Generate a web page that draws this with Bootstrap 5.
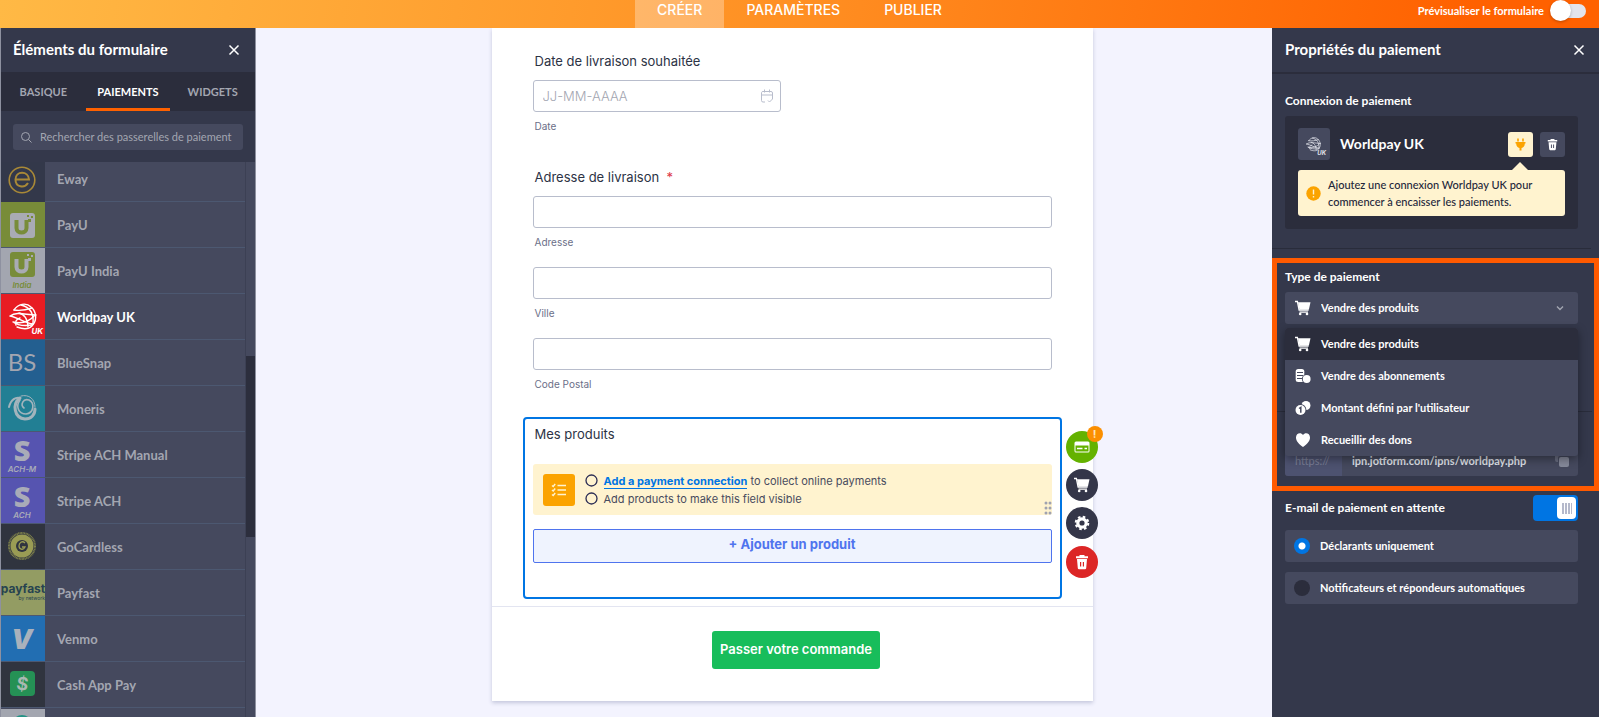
<!DOCTYPE html>
<html lang="fr">
<head>
<meta charset="utf-8">
<meta name="viewport" content="width=device-width, initial-scale=1">
<title>Créateur de formulaire</title>
<link rel="stylesheet" href="https://cdn.jsdelivr.net/npm/bootstrap@5.3.0/dist/css/bootstrap.min.css">
<style>
:root{--panel:#34384b;--panel-dark:#2b2d3c;--field:#45495e;--muted:#a3a6b1;--accent:#ff6100;--blue:#0075e3;--ui:Lato,"Liberation Sans",sans-serif;--form:Inter,"Liberation Sans",sans-serif}
body{font-family:var(--ui);background:#f3f3fe;font-size:11px;line-height:16px}
button,input,select{font-family:inherit}
.topbar{height:28px;background:linear-gradient(100deg,#ffb945,#ff8f22 50%,#ff6100 92%)}
.topbar .nav-link{color:#fff;font:500 14px/20px var(--form);padding:0 22px 8px;border-radius:0}
.topbar .nav-link.active{background:#ffffff4d}
.preview{right:13px;top:0;color:#fff;font-weight:700;height:21px}
.preview-toggle{appearance:none;width:34px;height:14px;border-radius:7px;background:#e3e4ec;margin:0;position:relative}
.preview-toggle::before{content:"";position:absolute;left:-2px;top:-4px;width:21px;height:21px;border-radius:50%;background:#fff;box-shadow:0 1px 3px #0004}
.side{background:var(--panel);color:#fff}
.side-left{width:256px;border-left:1px solid #8e91a0;border-right:1px solid #8e91a0}
.side-right{width:327px}
.side-title{height:44px;padding:0 13px 2px}
.side-left .side-title{padding-left:12px;padding-right:14px}
.side-title h2{font-size:15px;font-weight:700;line-height:20px;margin:0}
.side-right .side-title{height:46px;border-bottom:2px solid var(--panel-dark)}
.plain{border:0;background:none;padding:0;color:inherit;display:flex}
.side-title .plain{margin-top:2px}
.side-tabs{background:var(--panel-dark);height:39px}
.side-tabs .nav-link{color:var(--muted);font-size:11px;font-weight:700;line-height:32px;padding:4px 0 0;border-radius:0;border-bottom:3px solid transparent}
.side-tabs .nav-link.active{color:#fff;border-color:var(--accent)}
.search{margin:13px 12px 12px;height:26px;background:var(--field);border-radius:3px;padding:0 6px 0 8px;gap:8px;color:var(--muted)}
.search input{background:none;border:0;color:#fff;font-size:11px;padding:0;min-width:0;outline:0}
.search input::placeholder{color:var(--muted);opacity:1}
.pay-list{background:var(--field);margin-top:-5px;min-width:0}
.pay-list .list-group-item{height:46px;padding:0;border:0;border-bottom:1px solid #4c5871;border-radius:0;background:none;color:var(--muted);font-size:13px;font-weight:700;gap:12px;flex:none}
.pay-list .list-group-item:first-child{height:45px}
.pay-list .list-group-item.chosen{color:#fff}
.pay-list svg{width:44px;height:45px;flex:none}
.track{width:10px;background:var(--field);border-left:1px solid #3c4054}
.thumb{background:#2c2e3d}
.canvas{padding-left:56px}
.sheet{max-width:601px;background:#fff;box-shadow:0 2px 4px #c4c7dc;padding:24px 0 32px;font-family:var(--form);color:#2c3345;height:max-content}
.group{padding:0 41px}
.q{font-size:13px;line-height:18px;font-weight:400;margin:0 0 10px 2px;display:block}
.sub{font-size:10px;line-height:14px;color:#6b6f88;margin:7px 0 0 2px;display:block}
.box{height:32px;border:1px solid #b8bdcc;border-radius:3px;padding:0 9px;font-size:13px;width:100%;color:#2c3345}
.box::placeholder{color:#a3a6b1;opacity:1;font-weight:300}
.date{width:248px}
.date svg{position:absolute;right:8px;top:9px}
.gap-a{margin-top:35px}.gap-b{margin-top:18px}
.selected{margin:26px 31px 7px;border:2px solid var(--blue);border-radius:4px;padding:6px 8px 34px}
.notice{margin-top:21px;background:#fff3cf;border-radius:3px;padding:7px 10px;gap:10px;height:51px;font-size:11px;line-height:18px;color:#484b5e}
.notice .tile{width:32px;height:32px;border-radius:3px;background:#fba300}
.notice li{gap:6px}
.notice a{color:var(--blue);font-weight:700;text-decoration:none;border-bottom:1px solid var(--blue);line-height:14px}
.grip{right:0;bottom:0}
.add{margin-top:14px;height:34px;border:1px solid #4f74ee;background:#eff3fe;color:#4f74ee;font-size:13px;font-weight:700;border-radius:2px;padding:0 0 4px}
.tools{left:calc(100% + 6px);top:12px;gap:6px}
.tool{width:32px;height:32px;border:0;border-radius:50%;background:#343649;padding:0;position:relative;display:flex;align-items:center;justify-content:center}
.tool.pay{background:#64b200}.tool.del{background:#dc2626;margin-top:1px}
.alert-dot{position:absolute;right:-5px;top:-5px;width:16px;height:16px;border-radius:50%;background:#fb8f00;color:#ffe3b8;font:700 11px/16px var(--form)}
.send{border-top:1px solid #e3e5f1;padding:24px 0 0 8px}
.send button{height:38px;border:0;border-radius:3px;background:#18bd5b;color:#fff;font-size:13px;font-weight:600;padding:0 8px 2px}
.props{padding:19px 21px 0 13px}
.lab{font-size:12px;line-height:16px;font-weight:700;margin:0 0 7px;display:block}
.conn{background:var(--panel-dark);border-radius:3px;padding:12px 13px 13px}
.conn .logo{width:32px;height:32px;border-radius:3px;background:var(--field)}
.conn h3{font-size:14px;line-height:20px;font-weight:700;margin:0 0 0 10px}
.sq{width:25px;height:25px;border-radius:3px;background:var(--field);align-items:center;justify-content:center}
.sq.on{background:#fff3cf;margin-right:7px}
.tip{margin-top:10px;background:#fff3cf;border-radius:3px;color:#23263a;font-size:11px;line-height:17px;font-weight:500;padding:6px 8px;gap:7px;position:relative}
.tip::before{content:"";position:absolute;right:37px;top:-8px;border:8px solid transparent;border-top:0;border-bottom-color:#fff3cf}
.line{border-top:1px solid #292c3b;margin:19px 8px 0 0}
.spot{border:5px solid #ff5a00;margin-top:9px;padding:6px 16px 10px 8px}
.pick{height:32px;width:100%;appearance:none;border:0;border-radius:3px;background:var(--field);color:#fff;font-size:11px;font-weight:700;padding:0 36px}
.pick-icon{position:absolute;left:10px;top:8px}.pick-caret{position:absolute;right:14px;top:13px}
.menu{position:absolute;top:36px;left:0;right:0;z-index:2;background:var(--field);border-radius:3px;overflow:hidden;box-shadow:0 3px 10px #0006;margin:0;padding:0}
.menu button{height:32px;width:100%;border:0;background:none;color:#fff;font-size:11px;font-weight:700;padding:0 10px;gap:10px;text-align:left}
.menu .cur{background:var(--panel-dark)}
.spot .line{margin:87px -14px 0 -8px}
.url{margin-top:32px;height:32px;background:var(--field);border-radius:3px;overflow:hidden}
.url span{width:57px;background:#4d5270;color:#7b7f96;line-height:34px;padding-left:10px}
.url input{border:0;background:none;color:#dfe0e6;font-size:11px;font-weight:700;padding:2px 0 0 10px;min-width:0}
.mail{margin:4px 21px 0 13px}
.big-toggle{appearance:none;width:45px;height:26px;border-radius:4px;background:var(--blue);margin:0;position:relative}
.big-toggle::before{content:"";position:absolute;right:2px;top:2px;width:19px;height:22px;border-radius:4px;background:repeating-linear-gradient(90deg,#b5b9cb 0 2px,#fff 2px 3px) center/10px 11px no-repeat #fff}
.opt{margin:9px 21px 0 13px;height:32px;background:var(--field);border-radius:3px;padding:0 9px;gap:10px;font-weight:700}
.opt + .opt{margin-top:10px}
.opt input{appearance:none;width:16px;height:16px;border-radius:50%;background:#2b2d3c;margin:0}
.opt input:checked{background:radial-gradient(circle,#fff 0 3px,var(--blue) 4px)}
svg text{font-family:Inter,"Liberation Sans",sans-serif}
</style>
</head>
<body class="vh-100 d-flex flex-column overflow-hidden">
<svg class="d-none">
 <symbol id="cart" viewBox="0 0 16 16"><path d="M0 1.500h2.400l1.700 8.500h9.500M4.500 12.200h8.500" fill="none" stroke="currentColor" stroke-width="1.300"/><path d="M3 2.200h12.500l-1.600 7.300H4.400z" fill="currentColor"/><circle cx="5.200" cy="14" r="1.300" fill="currentColor"/><circle cx="12" cy="14" r="1.300" fill="currentColor"/></symbol>
 <symbol id="trash" viewBox="0 0 14 16"><path d="M4.500 1h5v1.200H13v2H1v-2h3.500zM2 5h10l-.8 9.200a1.200 1.200 0 0 1-1.200 1H4a1.200 1.200 0 0 1-1.200-1zM5 8v4.500h1.200V8zM7.800 8v4.500H9V8z" fill="currentColor" fill-rule="evenodd"/></symbol>
 <symbol id="cross" viewBox="0 0 14 14"><path d="M2.500 2.500l9 9M11.500 2.500l-9 9" stroke="currentColor" stroke-width="1.500"/></symbol>
 <symbol id="globe" viewBox="0 0 28 28"><g fill="none" stroke="currentColor" stroke-width="1.400" stroke-linecap="round"><path d="M5 7C9 1 17-1 22 4c6 5 6 14 1 19-4 4-10 3-15 1"/><path d="M5 7c6 1 12 0 18-2M1 13c7-5 16-1 26-1M1 13c9 2 15 7 23 8M4 19c8 2 16 0 22-7M4 19c4 3 12 4 19 3"/><path d="M12 2c9 2 13 9 12 19M10 10c5 1 9 6 9 14M11 15c-4 1-5 4-4 7"/></g></symbol>
</svg>

<header class="topbar position-relative d-flex justify-content-center flex-shrink-0">
 <nav class="nav"><a class="nav-link active" href="#">CRÉER</a><a class="nav-link" href="#">PARAMÈTRES</a><a class="nav-link" href="#">PUBLIER</a></nav>
 <div class="preview position-absolute d-flex align-items-center gap-2"><label for="preview">Prévisualiser le formulaire</label><input class="preview-toggle" type="checkbox" role="switch" id="preview"></div>
</header>

<div class="d-flex flex-grow-1 overflow-hidden">
 <aside class="side side-left d-flex flex-column flex-shrink-0">
  <div class="side-title d-flex align-items-center justify-content-between flex-shrink-0"><h2>Éléments du formulaire</h2><button class="plain" aria-label="Fermer"><svg width="14" height="14"><use href="#cross"/></svg></button></div>
  <nav class="side-tabs nav nav-fill flex-nowrap flex-shrink-0"><a class="nav-link w-100" href="#">BASIQUE</a><a class="nav-link w-100 active" href="#">PAIEMENTS</a><a class="nav-link w-100" href="#">WIDGETS</a></nav>
  <div class="search d-flex align-items-center flex-shrink-0"><svg width="11" height="11" viewBox="0 0 11 11" class="flex-shrink-0"><circle cx="4.500" cy="4.500" r="4" fill="none" stroke="currentColor"/><path d="M7.500 7.500l3 3" stroke="currentColor"/></svg><input class="flex-grow-1" type="text" aria-label="Rechercher" placeholder="Rechercher des passerelles de paiement"></div>
  <div class="d-flex flex-grow-1 overflow-hidden">
   <div class="pay-list list-group list-group-flush flex-grow-1">
    <button class="list-group-item d-flex align-items-center"><svg viewBox="0 0 44 45"><path fill="#33384a" d="M0 0h44v45H0z"/><g fill="none" stroke="#a98937"><circle cx="21" cy="23" r="12.800" stroke-width="1.600"/><path d="M14.500 22.500h13.500c-.5-9-13.500-9-13.500 0 0 8 9 9 12.500 3.500" stroke-width="2"/></g></svg>Eway</button>
    <button class="list-group-item d-flex align-items-center"><svg viewBox="0 0 44 45"><path fill="#788c39" d="M0 0h44v45H0z"/><rect x="9" y="11" width="25" height="25" rx="3" fill="#a9abb4"/><path d="M15.500 18v8c0 6 10 6 10 0v-8" fill="none" stroke="#788c39" stroke-width="4"/><path d="M27 17h3v3h-3zM30 14h2v2h-2zM26 13h2v2h-2z" fill="#788c39"/></svg>PayU</button>
    <button class="list-group-item d-flex align-items-center"><svg viewBox="0 0 44 45"><path fill="#a3a6b0" d="M0 0h44v45H0z"/><rect x="9" y="4" width="25" height="25" rx="3" fill="#788c39"/><path d="M15.500 11v8c0 6 10 6 10 0v-8" fill="none" stroke="#a9abb4" stroke-width="4"/><path d="M27 10h3v3h-3zM30 7h2v2h-2zM26 6h2v2h-2z" fill="#a9abb4"/><text x="21" y="40" font-size="8" font-weight="600" font-style="italic" text-anchor="middle" fill="#788c39">India</text></svg>PayU India</button>
    <button class="list-group-item chosen d-flex align-items-center"><svg viewBox="0 0 44 45"><path fill="#e81c23" d="M0 0h44v45H0z"/><use href="#globe" x="8" y="9" width="28" height="28" color="#fff"/><text x="42" y="40" font-size="8" font-weight="700" font-style="italic" text-anchor="end" fill="#fff">UK</text></svg>Worldpay UK</button>
    <button class="list-group-item d-flex align-items-center"><svg viewBox="0 0 44 45"><path fill="#235f90" d="M0 0h44v45H0z"/><text x="21" y="31" font-size="24" font-weight="400" text-anchor="middle" fill="#a3a6b0" style="font-family:'Liberation Sans Narrow',Lato,sans-serif">BS</text></svg>BlueSnap</button>
    <button class="list-group-item d-flex align-items-center"><svg viewBox="0 0 44 45"><path fill="#227f94" d="M0 0h44v45H0z"/><g fill="none" stroke="#a3b4bc" stroke-linecap="round"><path d="M8 21c2-8 7-10 11-9" stroke-width="2"/><path d="M19 12c-8 6-6 20 5 21 6 0 10-4 10-10" stroke-width="3"/><path d="M19 14c-5 7-1 14 6 14 8-1 9-11 3-14-6-2-9 5-5 8" stroke-width="1.600"/><path d="M20 10c8-2 14 3 14 11" stroke-width="1"/></g></svg>Moneris</button>
    <button class="list-group-item d-flex align-items-center"><svg viewBox="0 0 44 45"><path fill="#5654b0" d="M0 0h44v45H0z"/><text x="21" y="29" font-size="29" font-weight="900" text-anchor="middle" fill="#a9abb8" style="font-family:'Open Sans'">S</text><text x="21" y="40" font-size="8" font-weight="600" font-style="italic" text-anchor="middle" fill="#a9abb8">ACH-M</text></svg>Stripe ACH Manual</button>
    <button class="list-group-item d-flex align-items-center"><svg viewBox="0 0 44 45"><path fill="#5654b0" d="M0 0h44v45H0z"/><text x="21" y="29" font-size="29" font-weight="900" text-anchor="middle" fill="#a9abb8" style="font-family:'Open Sans'">S</text><text x="21" y="40" font-size="8" font-weight="600" font-style="italic" text-anchor="middle" fill="#a9abb8">ACH</text></svg>Stripe ACH</button>
    <button class="list-group-item d-flex align-items-center"><svg viewBox="0 0 44 45"><path fill="#30343f" d="M0 0h44v45H0z"/><circle cx="21" cy="22" r="13" fill="none" stroke="#7f824c" stroke-width="2" stroke-dasharray="1 .5"/><circle cx="21" cy="22" r="11.500" fill="#9a9c54"/><circle cx="21" cy="22" r="6" fill="#30343f"/><path d="M24 19c-3-3-6 0-6 3s4 5 6 1h-3" fill="none" stroke="#9a9c54" stroke-width="1.300"/></svg>GoCardless</button>
    <button class="list-group-item d-flex align-items-center"><svg viewBox="0 0 44 45"><path fill="#939c63" d="M0 0h44v45H0z"/><text x="22" y="23" font-size="12" font-weight="700" text-anchor="middle" fill="#274350">payfast</text><text x="44" y="30" font-size="5" font-weight="400" text-anchor="end" fill="#274350">by network</text></svg>Payfast</button>
    <button class="list-group-item d-flex align-items-center"><svg viewBox="0 0 44 45"><path fill="#226eb2" d="M0 0h44v45H0z"/><text x="21" y="33" font-size="27" font-weight="900" font-style="italic" text-anchor="middle" fill="#a9b1bc">V</text></svg>Venmo</button>
    <button class="list-group-item d-flex align-items-center"><svg viewBox="0 0 44 45"><path fill="#30343f" d="M0 0h44v45H0z"/><rect x="9" y="9" width="25" height="25" rx="4" fill="#259155"/><text x="21.500" y="28" font-size="18" font-weight="700" text-anchor="middle" fill="#a9b8b2" transform="rotate(8 21 22)">$</text></svg>Cash App Pay</button>
    <button class="list-group-item d-flex align-items-center" aria-label="Élément suivant"><svg viewBox="0 0 44 45"><path fill="#a3a6b0" d="M0 0h44v45H0z"/><circle cx="21" cy="16" r="10" fill="#239285"/></svg></button>
   </div>
   <div class="track flex-shrink-0"><div style="height:35%"></div><div class="thumb" style="height:32.600%"></div></div>
  </div>
 </aside>

 <main class="canvas flex-grow-1 d-flex justify-content-center overflow-hidden">
  <form class="sheet w-100">
   <div class="group">
    <label class="q" for="d">Date de livraison souhaitée</label>
    <div class="date position-relative"><input class="box" id="d" placeholder="JJ-MM-AAAA"><svg width="12" height="14" viewBox="0 0 12 14" fill="none" stroke="#b8bdcc"><path d="M4 13H2a1.500 1.500 0 0 1-1.500-1.500v-8A1.500 1.500 0 0 1 2 2.500h8a1.500 1.500 0 0 1 1.500 1.500v6M.500 6h11M3.500.500v3M8.500.500v3M7 11.500l1.500 1.500 3-3"/></svg></div>
    <span class="sub">Date</span>
    <label class="q gap-a" for="a">Adresse de livraison &nbsp;<span class="text-danger">*</span></label>
    <input class="box" id="a"><label class="sub" for="a">Adresse</label>
    <input class="box gap-b" id="v"><label class="sub" for="v">Ville</label>
    <input class="box gap-b" id="c"><label class="sub" for="c">Code Postal</label>
   </div>
   <section class="selected position-relative">
    <h3 class="q mb-0">Mes produits</h3>
    <div class="notice d-flex align-items-center position-relative">
     <div class="tile d-flex align-items-center justify-content-center"><svg width="16" height="14" viewBox="0 0 16 14" fill="none" stroke="#fff3cf" stroke-width="1.500"><path d="M6.500 2.500H15M6.500 7H15M6.500 11.500H15M1 2.500l1.200 1L4.200 1M1 7l1.200 1 2-2.500M1 11.500l1.200 1 2-2.500"/></svg></div>
     <ul class="list-unstyled m-0">
      <li class="d-flex align-items-center"><svg width="13" height="13"><circle cx="6.500" cy="6.500" r="5.500" fill="none" stroke="#2b2d55" stroke-width="1.300"/></svg><span><a href="#">Add a payment connection</a> to collect online payments</span></li>
      <li class="d-flex align-items-center"><svg width="13" height="13"><circle cx="6.500" cy="6.500" r="5.500" fill="none" stroke="#2b2d55" stroke-width="1.300"/></svg><span>Add products to make this field visible</span></li>
     </ul>
     <svg class="grip position-absolute" width="8" height="14" fill="#9fa2b0"><circle cx="2" cy="2" r="1.500"/><circle cx="6" cy="2" r="1.500"/><circle cx="2" cy="7" r="1.500"/><circle cx="6" cy="7" r="1.500"/><circle cx="2" cy="12" r="1.500"/><circle cx="6" cy="12" r="1.500"/></svg>
    </div>
    <button type="button" class="add w-100">+ Ajouter un produit</button>
    <div class="tools position-absolute d-flex flex-column">
     <button type="button" class="tool pay" aria-label="Paiement"><svg width="16" height="12" viewBox="0 0 16 12"><rect x=".5" y=".5" width="15" height="11" rx="1.500" fill="#fff"/><path d="M1.500 4.500h13v6h-13z" fill="#64b200"/><path d="M3 7.500h5.500M10.500 7.500H13" stroke="#fff" stroke-width="1.600"/></svg><span class="alert-dot">!</span></button>
     <button type="button" class="tool text-white" aria-label="Produits"><svg width="16" height="16"><use href="#cart"/></svg></button>
     <button type="button" class="tool" aria-label="Réglages"><svg width="16" height="16" viewBox="-8 -8 16 16"><circle r="5.800" fill="#fff"/><circle r="6.300" fill="none" stroke="#fff" stroke-width="2" stroke-dasharray="2.600 2.350"/><circle r="2.600" fill="#343649"/></svg></button>
     <button type="button" class="tool del text-white" aria-label="Supprimer"><svg width="14" height="16"><use href="#trash"/></svg></button>
    </div>
   </section>
   <div class="send text-center"><button type="button">Passer votre commande</button></div>
  </form>
 </main>

 <aside class="side side-right flex-shrink-0">
  <div class="side-title d-flex align-items-center justify-content-between"><h2>Propriétés du paiement</h2><button class="plain" aria-label="Fermer"><svg width="14" height="14"><use href="#cross"/></svg></button></div>
  <div class="props">
   <span class="lab">Connexion de paiement</span>
   <div class="conn">
    <div class="d-flex align-items-center"><div class="logo"><svg width="32" height="32"><use href="#globe" x="8" y="9" width="15" height="15" color="#e3e4ec"/><text x="28" y="27" font-size="6" font-weight="700" font-style="italic" text-anchor="end" fill="#e3e4ec">UK</text></svg></div><h3 class="flex-grow-1">Worldpay UK</h3>
     <button class="plain sq on" aria-label="Connecter"><svg width="11" height="13" viewBox="0 0 11 13" fill="#fba300"><path d="M2.200.500h1.600v3H2.200zM7.200.500h1.600v3H7.200zM.500 4h10v1.500h-.700C9.800 8 8.500 9.500 6.500 10v2.500h-2V10C2.500 9.500 1.200 8 1.200 5.500H.500z"/></svg></button>
     <button class="plain sq" aria-label="Supprimer"><svg width="11" height="13"><use href="#trash"/></svg></button></div>
    <div class="tip d-flex align-items-center"><svg width="15" height="15" viewBox="0 0 15 15" class="flex-shrink-0"><circle cx="7.500" cy="7.500" r="7.200" fill="#fba300"/><path d="M7.500 3.500v5M7.500 10v1.500" stroke="#fff3cf" stroke-width="1.400"/></svg><span>Ajoutez une connexion Worldpay UK pour commencer à encaisser les paiements.</span></div>
   </div>
  </div>
  <div class="line"></div>
  <section class="spot">
   <label class="lab" for="type">Type de paiement</label>
   <div class="position-relative">
    <select class="pick" id="type"><option>Vendre des produits</option><option>Vendre des abonnements</option><option>Montant défini par l'utilisateur</option><option>Recueillir des dons</option></select>
    <svg class="pick-icon" width="16" height="16"><use href="#cart"/></svg>
    <svg class="pick-caret" width="8" height="7" viewBox="0 0 8 7"><path d="M1 1.500l3 3 3-3" fill="none" stroke="#a3a6b1" stroke-width="1.400"/></svg>
    <div class="menu">
     <button class="cur d-flex align-items-center"><svg width="16" height="16"><use href="#cart"/></svg>Vendre des produits</button>
     <button class="d-flex align-items-center"><svg width="16" height="16" viewBox="0 0 16 16"><rect x=".7" y="1" width="8.600" height="13" rx="2.500" fill="#fff"/><path d="M2 4.500h6M2 7.500h6M2 10.500h6" stroke="#45495e" stroke-width="1.100"/><circle cx="11.700" cy="11" r="4.800" fill="#45495e"/><circle cx="11.700" cy="11" r="3.900" fill="#fff"/></svg>Vendre des abonnements</button>
     <button class="d-flex align-items-center"><svg width="16" height="16" viewBox="0 0 16 16"><circle cx="11" cy="5.500" r="4.500" fill="#fff"/><circle cx="5.500" cy="10" r="5.900" fill="#45495e"/><circle cx="5.500" cy="10" r="5" fill="#fff"/><path d="M4 8.500l1.800-1.200v5.500" fill="none" stroke="#45495e" stroke-width="1.500"/></svg>Montant défini par l'utilisateur</button>
     <button class="d-flex align-items-center"><svg width="16" height="16" viewBox="0 0 16 16"><path d="M8 15C3 11.500 1 8.500 1 5.500 1 1 6 0 8 3c2-3 7-2 7 2.500 0 3-2 6-7 9.500z" fill="#fff"/></svg>Recueillir des dons</button>
    </div>
   </div>
   <div class="line"></div>
   <div class="url d-flex"><span class="flex-shrink-0">https://</span><input class="flex-grow-1" aria-label="URL IPN" value="ipn.jotform.com/ipns/worldpay.php"><svg class="flex-shrink-0 align-self-center me-2" width="16" height="16" viewBox="0 0 16 16"><rect x="1" y="0" width="10" height="10" rx="2" fill="#686c80"/><rect x="4" y="4" width="12" height="12" rx="2" fill="#45495e"/><rect x="5" y="5" width="10" height="10" rx="2" fill="#85899a"/></svg></div>
  </section>
  <div class="mail d-flex align-items-center justify-content-between"><label class="lab m-0" for="mail">E-mail de paiement en attente</label><input class="big-toggle" type="checkbox" role="switch" id="mail" checked></div>
  <label class="opt d-flex align-items-center"><input type="radio" name="who" checked>Déclarants uniquement</label>
  <label class="opt d-flex align-items-center"><input type="radio" name="who">Notificateurs et répondeurs automatiques</label>
 </aside>
</div>
<script src="https://cdn.jsdelivr.net/npm/bootstrap@5.3.0/dist/js/bootstrap.bundle.min.js"></script>
</body>
</html>
